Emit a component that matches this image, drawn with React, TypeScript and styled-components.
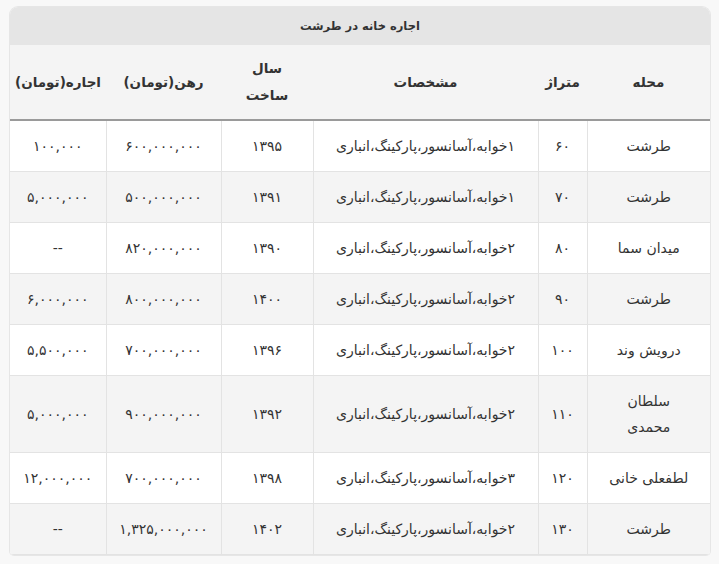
import React from "react";
import styled, { createGlobalStyle } from "styled-components";

const GlobalStyle = createGlobalStyle`
  html, body {
    margin: 0;
    padding: 0;
    background: #f8f8f8;
  }
  body {
    font-family: "DejaVu Sans", "Noto Sans", sans-serif;
    color: #333;
  }
`;

const Wrapper = styled.div`
  padding: 7px 9px 10px 10px;
`;

const Card = styled.div`
  width: 700px;
  background: #fff;
  border-radius: 8px 8px 4px 4px;
  box-shadow: 0 0 0 1px #e6e6e6;
  overflow: hidden;
`;

const Table = styled.table`
  width: 100%;
  border-collapse: collapse;
  table-layout: fixed;
  direction: rtl;
  font-size: 14px;

  th,
  td {
    box-sizing: border-box;
  }
`;

const Caption = styled.caption`
  background: #e5e5e5;
  height: 38px;
  line-height: 38px;
  font-size: 11.5px;
  font-weight: bold;
  color: #333;
  text-align: center;
`;

const HeadRow = styled.tr`
  background: #f4f4f4;
  border-bottom: 2px solid #9a9a9a;
`;

const HeadCell = styled.th<{ $w: number; $pad: number }>`
  width: ${(p) => p.$w}px;
  padding: 10px ${(p) => p.$pad}px;
  line-height: 27px;
  font-weight: bold;
  font-size: 13.5px;
  text-align: center;
`;

const Row = styled.tr<{ $striped: boolean }>`
  background: ${(p) => (p.$striped ? "#f4f4f4" : "#fff")};
`;

const Cell = styled.td<{ $pad: number }>`
  padding: 12px ${(p) => p.$pad}px;
  line-height: 26px;
  text-align: center;
  border: 1px solid #e3e3e3;
  border-top: none;
  &:first-child {
    border-right: none;
  }
  &:last-child {
    border-left: none;
  }
`;

const columns = [
  { title: "محله", w: 123, pad: 18 },
  { title: "متراژ", w: 49, pad: 4 },
  { title: "مشخصات", w: 225, pad: 10 },
  { title: "سال ساخت", w: 92, pad: 14 },
  { title: "رهن(تومان)", w: 115, pad: 6 },
  { title: "اجاره(تومان)", w: 96, pad: 5 },
];

const spec = (n: string) => `${n}خوابه،آسانسور،پارکینگ،انباری`;

const rows = [
  ["طرشت", "۶۰", spec("۱"), "۱۳۹۵", "۶۰۰,۰۰۰,۰۰۰", "۱۰۰,۰۰۰"],
  ["طرشت", "۷۰", spec("۱"), "۱۳۹۱", "۵۰۰,۰۰۰,۰۰۰", "۵,۰۰۰,۰۰۰"],
  ["میدان سما", "۸۰", spec("۲"), "۱۳۹۰", "۸۲۰,۰۰۰,۰۰۰", "--"],
  ["طرشت", "۹۰", spec("۲"), "۱۴۰۰", "۸۰۰,۰۰۰,۰۰۰", "۶,۰۰۰,۰۰۰"],
  ["درویش وند", "۱۰۰", spec("۲"), "۱۳۹۶", "۷۰۰,۰۰۰,۰۰۰", "۵,۵۰۰,۰۰۰"],
  ["سلطان محمدی", "۱۱۰", spec("۲"), "۱۳۹۲", "۹۰۰,۰۰۰,۰۰۰", "۵,۰۰۰,۰۰۰"],
  ["لطفعلی خانی", "۱۲۰", spec("۳"), "۱۳۹۸", "۷۰۰,۰۰۰,۰۰۰", "۱۲,۰۰۰,۰۰۰"],
  ["طرشت", "۱۳۰", spec("۲"), "۱۴۰۲", "۱,۳۲۵,۰۰۰,۰۰۰", "--"],
];

export default function App() {
  return (
    <>
      <GlobalStyle />
      <Wrapper>
        <Card>
          <Table>
            <Caption>اجاره خانه در طرشت</Caption>
            <thead>
              <HeadRow>
                {columns.map((c) => (
                  <HeadCell key={c.title} $w={c.w} $pad={c.pad}>
                    {c.title}
                  </HeadCell>
                ))}
              </HeadRow>
            </thead>
            <tbody>
              {rows.map((r, i) => (
                <Row key={i} $striped={i % 2 === 1}>
                  {r.map((v, j) => (
                    <Cell key={j} $pad={columns[j].pad}>
                      {v}
                    </Cell>
                  ))}
                </Row>
              ))}
            </tbody>
          </Table>
        </Card>
      </Wrapper>
    </>
  );
}
